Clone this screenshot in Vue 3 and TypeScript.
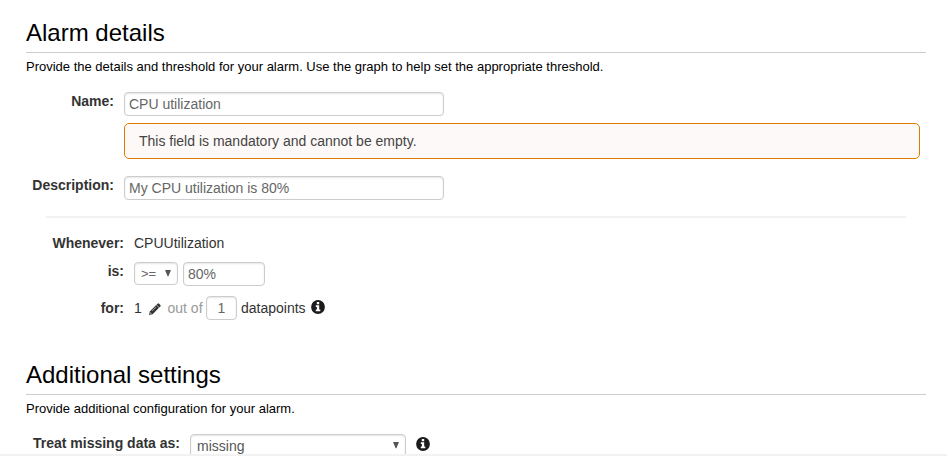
<script setup lang="ts">
import { ref } from 'vue'

const name = ref('CPU utilization')
const description = ref('My CPU utilization is 80%')
const threshold = ref('80%')
const datapoints = ref('1')
const operator = '>='
const missingData = 'missing'
</script>

<template>
  <div class="page">
    <main class="content">
      <section class="details">
        <h2>Alarm details</h2>
        <p class="intro">Provide the details and threshold for your alarm. Use the graph to help set the appropriate threshold.</p>
        <div class="row name-row">
          <label class="label wide" for="name">Name:</label>
          <div class="stack">
            <input id="name" v-model="name" class="field long" />
            <div class="alert">This field is mandatory and cannot be empty.</div>
          </div>
        </div>
        <div class="row desc-row">
          <label class="label wide" for="desc">Description:</label>
          <input id="desc" v-model="description" class="field long" />
        </div>
        <div class="divider"></div>
        <div class="row metric-row">
          <span class="label mid">Whenever:</span>
          <span class="text">CPUUtilization</span>
        </div>
        <div class="row is-row">
          <span class="label mid">is:</span>
          <div class="select operator">
            <span>{{ operator }}</span>
            <svg class="arrow" viewBox="0 0 6 7"><path d="M0 0H6L3.4 6.2H2.6Z" /></svg>
          </div>
          <input v-model="threshold" class="field threshold" />
        </div>
        <div class="row for-row">
          <span class="label mid">for:</span>
          <span class="text one">1</span>
          <svg class="pencil" viewBox="0 0 12 12">
            <path d="M8.5.7Q9.3-.1 10.1.7L11.3 1.9Q12.1 2.7 11.3 3.5L10.3 4.5 7.5 1.7Z" />
            <path fill-rule="evenodd" d="M7.2 2 10 4.8 3.6 11.2 0 12 .8 8.4ZM1.5 9.3 1.2 10.8 2.7 10.5ZM6.9 3.8 3 7.7 3.3 8 7.2 4.1Z" />
          </svg>
          <span class="text muted">out of</span>
          <input v-model="datapoints" class="field points" />
          <span class="text unit">datapoints</span>
          <svg class="info" viewBox="0 0 14 14">
            <circle cx="7" cy="7" r="6.9" />
            <path d="M5.8 2H8.2V4.2H5.8ZM4.8 5.3H8.2V9.6H9.3V11.3H4.8V9.6H5.9V7H4.8Z" fill="#fff" />
          </svg>
        </div>
      </section>
      <section class="additional">
        <h2>Additional settings</h2>
        <p class="intro">Provide additional configuration for your alarm.</p>
        <div class="row missing-row">
          <span class="label missing">Treat missing data as:</span>
          <div class="select missing-select">
            <span>{{ missingData }}</span>
            <svg class="arrow" viewBox="0 0 6 7"><path d="M0 0H6L3.4 6.2H2.6Z" /></svg>
          </div>
          <svg class="info" viewBox="0 0 14 14">
            <circle cx="7" cy="7" r="6.9" />
            <path d="M5.8 2H8.2V4.2H5.8ZM4.8 5.3H8.2V9.6H9.3V11.3H4.8V9.6H5.9V7H4.8Z" fill="#fff" />
          </svg>
        </div>
      </section>
    </main>
    <div class="bottom-bar"></div>
  </div>
</template>

<style>
body {
  margin: 0;
  background: #fff;
}
</style>

<style scoped>
* {
  box-sizing: border-box;
}
.page {
  width: 947px;
  height: 457px;
  overflow: hidden;
  font: 14px/20px "Liberation Sans", Arial, sans-serif;
  color: #333;
}
.content {
  height: 454px;
  padding: 14px 21px 0 26px;
  overflow: hidden;
}
.details {
  height: 342px;
}
h2 {
  height: 39px;
  margin: 0;
  border-bottom: 1px solid #ccc;
  font-size: 24px;
  font-weight: 400;
  line-height: 38px;
  color: #000;
}
.intro {
  height: 39px;
  margin: 0;
  font: 13px/27px "Liberation Sans", Arial, sans-serif;
  color: #000;
}
.row {
  display: flex;
  align-items: flex-start;
}
.label {
  flex: none;
  text-align: right;
  font-weight: 700;
  color: #333;
}
.wide {
  width: 88px;
}
.mid {
  width: 98px;
}
.name-row .label,
.desc-row .label,
.is-row .label {
  line-height: 18px;
}
.stack {
  flex: 1;
  margin: 0 6px 0 10px;
}
.field {
  display: block;
  height: 24px;
  margin: 0;
  padding: 0 4px;
  border: 1px solid #ccc;
  border-radius: 4px;
  outline: none;
  background: #fff;
  box-shadow: inset 0 1px 2px rgba(0, 0, 0, 0.1);
  font: 14px/20px "Liberation Sans", Arial, sans-serif;
  color: #666;
}
.long {
  width: 320px;
}
.alert {
  height: 36px;
  margin-top: 7px;
  padding-left: 14px;
  border: 1px solid #df7b00;
  border-radius: 5px;
  background: #fdf9f8;
  line-height: 34px;
  color: #444;
}
.name-row {
  height: 84px;
}
.desc-row {
  height: 40px;
}
.desc-row .field {
  margin-left: 10px;
}
.divider {
  height: 2px;
  margin: 0 20px;
  background: #f2f2f2;
}
.metric-row {
  height: 44px;
  padding-top: 15px;
}
.metric-row .text {
  margin-left: 10px;
}
.select {
  display: flex;
  align-items: center;
  justify-content: space-between;
  border: 1px solid #ccc;
  border-radius: 4px;
  background: #fff;
  box-shadow: inset 0 1px 2px rgba(0, 0, 0, 0.1);
  color: #555;
}
.arrow {
  width: 6px;
  height: 7px;
  fill: #555;
}
.operator {
  width: 44px;
  height: 23px;
  margin-left: 10px;
  padding: 0 6px;
  font-size: 13px;
  color: #666;
}
.threshold {
  width: 82px;
  margin-left: 5px;
}
.is-row {
  height: 34px;
}
.for-row {
  align-items: center;
  height: 24px;
}
.one {
  width: 15px;
  margin-left: 10px;
}
.pencil {
  width: 12px;
  height: 12px;
  margin-top: 2px;
  fill: #333;
}
.muted {
  width: 38.5px;
  margin-left: 6.5px;
  color: #999;
  white-space: nowrap;
}
.points {
  width: 31px;
  padding: 0;
  text-align: center;
}
.unit {
  width: 66px;
  margin-left: 4px;
}
.info {
  flex: none;
  width: 14px;
  height: 14px;
  margin: 0 0 2px 4px;
  fill: #1c1c1c;
}
.missing {
  width: 154px;
  line-height: 18px;
}
.missing-select {
  width: 216px;
  height: 24px;
  margin-left: 10px;
  padding: 0 6px;
}
.missing-select span {
  line-height: 20px;
}
.missing-select .arrow {
  margin-bottom: 1px;
}
.missing-row .info {
  margin: 3px 0 0 10px;
}
.bottom-bar {
  height: 2px;
  background: #f2f2f2;
}
</style>
